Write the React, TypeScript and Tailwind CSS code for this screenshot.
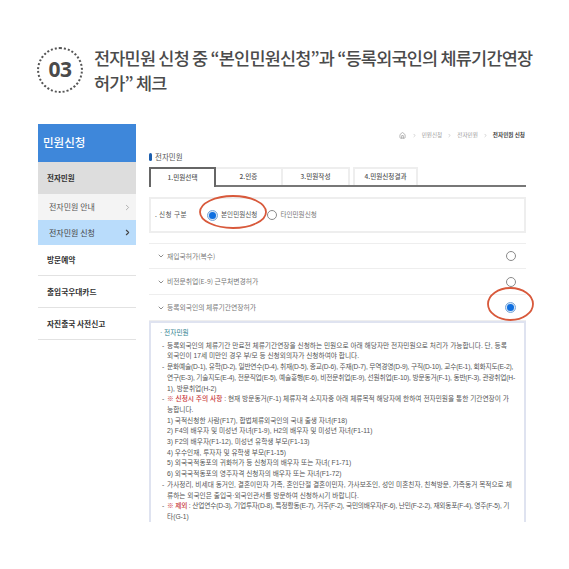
import React from 'react';
import { ChevronDown, ChevronRight, Home } from 'lucide-react';

const Radio = ({ checked }: { checked?: boolean }) =>
  checked ? (
    <span className="w-[11px] h-[11px] rounded-full border border-[#7aa7d8] bg-[#d6e6f7] flex items-center justify-center shrink-0">
      <span className="w-[7px] h-[7px] rounded-full bg-[#0f6fe0]" />
    </span>
  ) : (
    <span className="w-[10px] h-[10px] rounded-full border border-[#8a8a8a] bg-white shrink-0" />
  );

const Row = ({ label, checked, h }: { label: string; checked?: boolean; h: string }) => (
  <div className={`${h} flex items-center border-b border-[#eeeeee] pl-[8px] pr-[10px]`}>
    <ChevronDown size={8} strokeWidth={2} className="text-[#555] mr-[2px]" />
    <span className="text-[6.8px] text-[#777] flex-1">{label}</span>
    <Radio checked={checked} />
  </div>
);

const Line = ({ children, dash, tight }: { children: React.ReactNode; dash?: boolean; tight?: boolean }) => (
  <div className={`relative whitespace-nowrap pl-[16px] ${tight ? 'tracking-[-0.17px]' : ''}`}>
    {dash && <span className="absolute left-[11px] top-0">-</span>}
    {children}
  </div>
);

const Red = ({ children }: { children: React.ReactNode }) => (
  <span className="text-[#c8383a] font-medium">{children}</span>
);

export default function App() {
  return (
    <div className="relative w-[569px] h-[569px] bg-white overflow-hidden font-['Noto_Sans_CJK_KR','Noto_Sans',sans-serif]">
      {/* Step heading */}
      <div className="flex pl-[37px] pt-[47px] h-[124px]">
        <div className="w-[46px] h-[46px] rounded-full border-2 border-dotted border-[#555] flex items-center justify-center shrink-0">
          <span className="text-[21px] font-bold text-[#4a4a4a] tracking-tight font-['Noto_Sans',sans-serif]">03</span>
        </div>
        <h1 className="ml-[11px] -mt-[2px] text-[17.5px] leading-[25px] font-medium text-[#4b4b4b] whitespace-nowrap tracking-[-0.8px]">
          전자민원 신청 중 “본인민원신청”과 “등록외국인의 체류기간연장
          <br />
          허가” 체크
        </h1>
      </div>

      <div className="flex pl-[38px]">
        {/* Sidebar */}
        <aside className="w-[98px] shrink-0">
          <div className="h-[38px] bg-[#3e87da] flex items-center pl-[5px] text-[11.5px] font-medium text-white">민원신청</div>
          <div className="h-[32px] bg-[#dddddd] flex items-center pl-[9px] text-[7.5px] font-bold text-[#333]">전자민원</div>
          <div className="h-[26px] bg-[#f4f4f4] flex items-center justify-between pl-[11px] pr-[4px] text-[8px] text-[#555]">
            전자민원 안내
            <ChevronRight size={9} className="text-[#999]" />
          </div>
          <div className="h-[25px] bg-[#b9dcfb] flex items-center justify-between pl-[11px] pr-[4px] text-[8px] text-[#444]">
            전자민원 신청
            <ChevronRight size={9} strokeWidth={3} className="text-[#444]" />
          </div>
          <div className="h-[31px] flex items-center pl-[9px] border-b border-[#e2e2e2] text-[7.7px] font-bold text-[#333]">방문예약</div>
          <div className="h-[32px] flex items-center pl-[9px] border-b border-[#e2e2e2] text-[7.7px] font-bold text-[#333]">출입국우대카드</div>
          <div className="h-[32px] flex items-center pl-[9px] border-b border-[#e2e2e2] text-[7.7px] font-bold text-[#333]">자진출국 사전신고</div>
        </aside>

        {/* Main content */}
        <main className="ml-[13px] w-[377px] shrink-0">
          <div className="h-[23px] flex items-center justify-end gap-[5px] text-[5.6px] text-[#999] pr-[1px]">
            <Home size={7} className="text-[#888] mr-[1px]" />
            <ChevronRight size={5} />
            <span>민원신청</span>
            <ChevronRight size={5} />
            <span>전자민원</span>
            <ChevronRight size={5} />
            <span className="font-bold text-[#444]">전자민원 신청</span>
          </div>
          <div className="h-[20px] flex items-center gap-[3px] text-[7.5px] text-[#555]">
            <span className="w-[3px] h-[8px] rounded-sm bg-[#1d5fae]" />
            전자민원
          </div>

          {/* Tabs */}
          <div className="flex h-[20px] border-b-2 border-[#777] text-[6.6px] font-medium text-[#555]">
            <div className="w-[67px] h-[20px] border-2 border-b-0 border-[#666] bg-white flex items-center justify-center">1.민원선택</div>
            <div className="w-[67px] border-t-2 border-r-2 border-[#eee] flex items-center justify-center">2.인증</div>
            <div className="w-[67px] border-t-2 border-r-2 border-[#eee] flex items-center justify-center">3.민원작성</div>
            <div className="ml-[3px] w-[65px] border-t-2 border-r-2 border-l-2 border-[#eee] flex items-center justify-center">4.민원신청결과</div>
          </div>

          {/* Applicant type */}
          <div className="mt-[10px] h-[36px] border-2 border-[#eeeeee] flex items-center pl-[4px] text-[6.6px] text-[#555]">
            <span className="w-[52px] tracking-[0.4px]">. 신청 구분</span>
            <Radio checked />
            <span className="ml-[3px] mr-[10px]">본인민원신청</span>
            <Radio />
            <span className="ml-[3px] text-[#777]">타인민원신청</span>
          </div>

          {/* Civil petition rows */}
          <div className="border-b border-[#eeeeee] h-[11px]" />
          <Row label="재입국허가(복수)" h="h-[25px]" />
          <Row label="비전문취업(E-9) 근무처변경허가" h="h-[26px]" />
          <Row label="등록외국인의 체류기간연장허가" checked h="h-[26px]" />

          {/* Detail box */}
          <div className="h-[201px] border-t-2 border-x-2 border-[#dfe3f0] font-['Liberation_Sans','Noto_Sans_CJK_KR',sans-serif] text-[6.7px] leading-[10.7px] text-[#555] overflow-hidden">
            <div className="pt-[5px] pb-[2px] pl-[9px] text-[#2f7f8f]">· 전자민원</div>
            <Line dash>등록외국인의 체류기간 만료전 체류기간연장을 신청하는 민원으로 아래 해당자만 전자민원으로 처리가 가능합니다. 단, 등록</Line>
            <Line>외국인이 17세 미만인 경우 부/모 등 신청외의자가 신청하여야 합니다.</Line>
            <Line dash tight>문화예술(D-1), 유학(D-2), 일반연수(D-4), 취재(D-5), 종교(D-6), 주재(D-7), 무역경영(D-9), 구직(D-10), 교수(E-1), 회화지도(E-2),</Line>
            <Line tight>연구(E-3), 기술지도(E-4), 전문직업(E-5), 예술흥행(E-6), 비전문취업(E-9), 선원취업(E-10), 방문동거(F-1), 동반(F-3), 관광취업(H-</Line>
            <Line>1), 방문취업(H-2)</Line>
            <Line dash><Red>※ 신청시 주의 사항</Red> : 현재 방문동거(F-1) 체류자격 소지자중 아래 체류목적 해당자에 한하여 전자민원을 통한 기간연장이 가</Line>
            <Line>능합니다.</Line>
            <Line>1) 국적신청한 사람(F17), 합법체류외국인의 국내 출생 자녀(F18)</Line>
            <Line>2) F4의 배우자 및 미성년 자녀(F1-9), H2의 배우자 및 미성년 자녀(F1-11)</Line>
            <Line>3) F2의 배우자(F1-12), 미성년 유학생 부모(F1-13)</Line>
            <Line>4) 우수인재, 투자자 및 유학생 부모(F1-15)</Line>
            <Line>5) 외국국적동포의 귀화허가 등 신청자의 배우자 또는 자녀( F1-71)</Line>
            <Line>6) 외국국적동포의 영주자격 신청자의 배우자 또는 자녀(F1-72)</Line>
            <Line dash>가사정리, 비세대 동거인, 결혼이민자 가족, 혼인단절 결혼이민자, 가사보조인, 성인 미혼친자, 친척방문, 가족동거 목적으로 체</Line>
            <Line>류하는 외국인은 출입국·외국인관서를 방문하여 신청하시기 바랍니다.</Line>
            <Line dash tight><Red>※ 제외</Red> : 산업연수(D-3), 기업투자(D-8), 특정활동(E-7), 거주(F-2), 국민의배우자(F-6), 난민(F-2-2), 재외동포(F-4), 영주(F-5), 기</Line>
            <Line>타(G-1)</Line>
          </div>
        </main>
      </div>

      {/* Hand-drawn highlight circles */}
      <svg className="absolute left-0 top-0 pointer-events-none" width="569" height="569" fill="none" stroke="#d8593b" strokeWidth="1.8">
        <ellipse cx="233" cy="212" rx="33" ry="16" />
        <ellipse cx="510.5" cy="304" rx="22.5" ry="16" />
      </svg>
    </div>
  );
}
